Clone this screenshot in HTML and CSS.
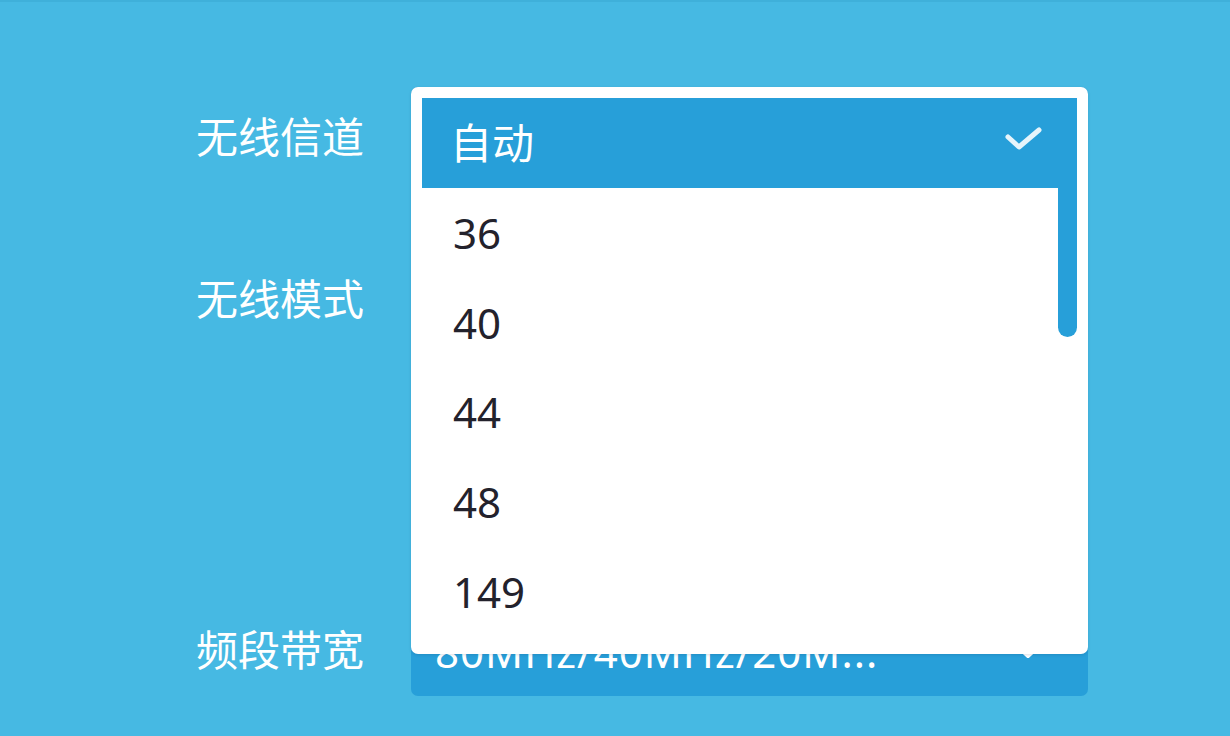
FILE: index.html
```html
<!DOCTYPE html>
<html lang="zh-CN">
<head>
<meta charset="utf-8">
<title>无线设置</title>
<link rel="stylesheet" href="styles.css">
</head>
<body>
<div class="page">
  <form class="form">
    <div class="row">
      <div class="label">无线信道</div>
      <div class="field">
        <div class="select">
          <span class="select-text">自动</span>
          <svg class="chev" width="36" height="20" viewBox="0 0 36 20"><path d="M4 3 L18 16 L32 3" fill="none" stroke="#fff" stroke-width="4" stroke-linecap="round" stroke-linejoin="round"/></svg>
        </div>
        <div class="menu">
          <div class="menu-list">
            <div class="item selected">自动
              <svg class="check" width="38" height="26" viewBox="0 0 38 26"><path d="M3 11 L14 21 L34 4" fill="none" stroke="#e6f4fb" stroke-width="5" stroke-linecap="round" stroke-linejoin="round"/></svg>
            </div>
            <div class="item">36</div>
            <div class="item">40</div>
            <div class="item">44</div>
            <div class="item">48</div>
            <div class="item">149</div>
            <div class="item">153</div>
          </div>
          <div class="thumb"></div>
        </div>
      </div>
    </div>
    <div class="row row-tall">
      <div class="label">无线模式</div>
      <div class="field">
        <div class="select">
          <span class="select-text">11a/n/ac混合</span>
        </div>
      </div>
    </div>
    <div class="row">
      <div class="label">频段带宽</div>
      <div class="field">
        <div class="select">
          <span class="select-text wide">80MHz/40MHz/20M...</span>
          <svg class="chev" width="36" height="20" viewBox="0 0 36 20"><path d="M4 3 L18 16 L32 3" fill="none" stroke="#fff" stroke-width="4" stroke-linecap="round" stroke-linejoin="round"/></svg>
        </div>
      </div>
    </div>
  </form>
</div>
</body>
</html>
```

FILE: styles.css
```css
html, body {
  margin: 0;
  padding: 0;
}
body {
  background: #46b9e3;
  font-family: "Noto Sans", "Noto Sans CJK SC", sans-serif;
  width: 1230px;
  height: 736px;
  overflow: hidden;
}
.page {
  height: 736px;
  border-top: 2px solid #3fb0da;
  box-sizing: border-box;
}
.form {
  display: flex;
  flex-direction: column;
  gap: 66px;
  padding-top: 85px;
  padding-left: 196px;
}
.row {
  display: flex;
  align-items: flex-start;
  gap: 47px;
}
.row-tall {
  padding-bottom: 189px;
}
.label {
  width: 168px;
  height: 96px;
  line-height: 96px;
  font-size: 42px;
  color: #ffffff;
  font-family: "Noto Sans CJK SC", sans-serif;
  white-space: nowrap;
}
.field {
  position: relative;
  width: 677px;
}
.select {
  position: relative;
  height: 96px;
  background: #279fd9;
  border-radius: 7px;
  box-sizing: border-box;
  padding: 7px 24px 0;
  line-height: 89px;
  color: #ffffff;
  font-size: 42px;
  white-space: nowrap;
  overflow: hidden;
}
.select-text.wide {
  letter-spacing: 1px;
}
.chev {
  position: absolute;
  right: 42px;
  top: 40px;
}
.menu {
  position: absolute;
  z-index: 10;
  left: 0;
  top: 0;
  width: 677px;
  height: 567px;
  background: #ffffff;
  border-radius: 7px;
  box-sizing: border-box;
  padding: 11px 11px 0 11px;
  overflow: hidden;
  box-shadow: 0 1px 3px rgba(0, 40, 80, 0.15);
}
.menu-list {
  display: flex;
  flex-direction: column;
}
.item {
  position: relative;
  height: 89.75px;
  line-height: 89.75px;
  padding-left: 31px;
  font-size: 42px;
  color: #23222c;
  white-space: nowrap;
}
.item.selected {
  background: #279fd9;
  color: #ffffff;
  padding-left: 28px;
}
.check {
  position: absolute;
  right: 34px;
  top: 28px;
}
.thumb {
  position: absolute;
  top: 11px;
  right: 11px;
  width: 19px;
  height: 239px;
  background: #279fd9;
  border-radius: 0 0 10px 10px;
}
```
